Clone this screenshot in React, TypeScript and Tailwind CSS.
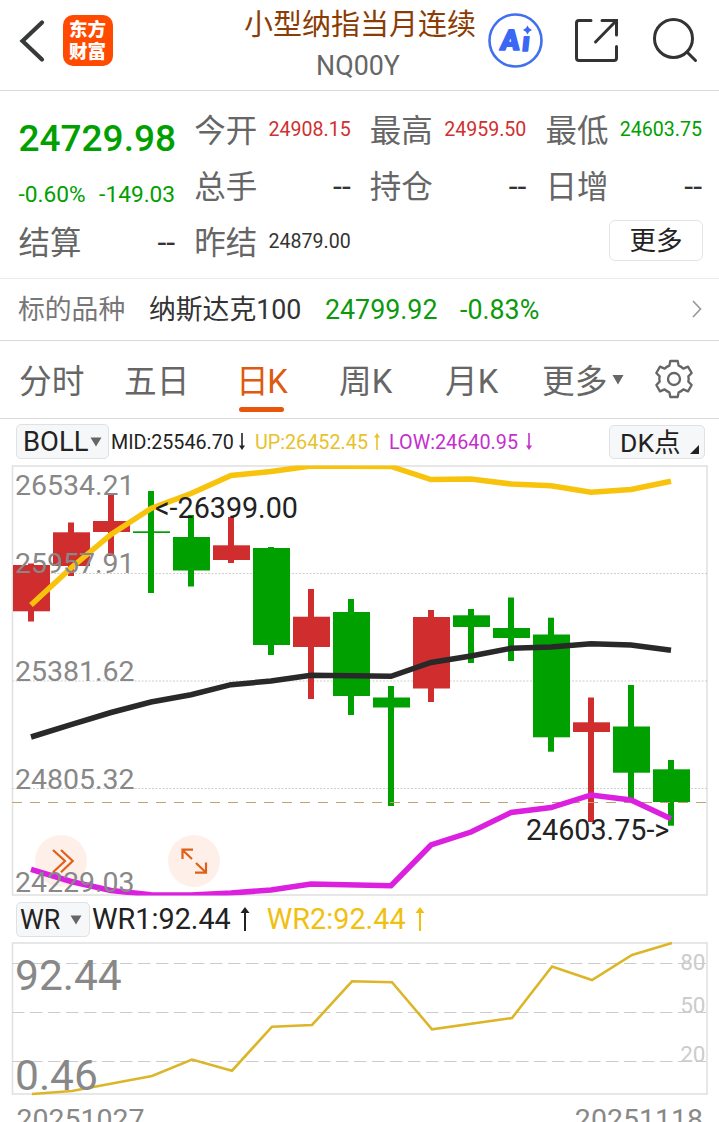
type Candle = {
  up: boolean;
  top: number;
  bottom: number;
  high: number;
  low: number;
};

type Point = [number, number];

const candles: Candle[] = [
  { up: true, top: 565, bottom: 611.3, high: 563.5, low: 621.5 },
  { up: true, top: 532.3, bottom: 566, high: 522.5, low: 576 },
  { up: true, top: 521, bottom: 532, high: 495, low: 556 },
  { up: false, top: 531.3, bottom: 533, high: 491, low: 593 },
  { up: false, top: 537, bottom: 570.5, high: 515, low: 586.5 },
  { up: true, top: 545.3, bottom: 560, high: 517, low: 563 },
  { up: false, top: 548, bottom: 645, high: 547, low: 655 },
  { up: true, top: 616.7, bottom: 647, high: 589, low: 699 },
  { up: false, top: 612, bottom: 696, high: 599, low: 715 },
  { up: false, top: 697.5, bottom: 707.5, high: 686, low: 806 },
  { up: true, top: 617, bottom: 688.5, high: 610, low: 702 },
  { up: false, top: 615.3, bottom: 627, high: 609, low: 663 },
  { up: false, top: 628, bottom: 638, high: 597.5, low: 661 },
  { up: false, top: 634.5, bottom: 737.3, high: 617.7, low: 751.7 },
  { up: true, top: 722.3, bottom: 732, high: 697.5, low: 822 },
  { up: false, top: 726.5, bottom: 772.7, high: 685, low: 800 },
  { up: false, top: 769.3, bottom: 802, high: 760, low: 825.7 },
];

const upper: Point[] = [
  [31, 605], [71, 568], [111, 534.5], [151, 508.5], [191, 493.5], [231, 475.5],
  [271, 471.5], [311, 466], [391, 466.5], [431, 479.5], [471, 479], [511, 484],
  [551, 485.8], [591, 492.3], [631, 489.5], [671, 481.3],
];

const middle: Point[] = [
  [31, 737], [71, 724.7], [111, 712.5], [151, 702], [191, 694.7], [231, 684.7],
  [271, 681], [311, 675.2], [391, 676.3], [431, 662.5], [471, 656], [511, 648.3],
  [551, 647], [591, 643.7], [631, 645], [671, 650.3],
];

const lower: Point[] = [
  [31, 869.3], [71, 881.5], [111, 890.5], [151, 894.7], [191, 895], [231, 893],
  [271, 890], [311, 884], [391, 885.7], [431, 845], [471, 832], [511, 812.5],
  [551, 807.5], [591, 795], [631, 800], [671, 818.7],
];

const wr: Point[] = [
  [32, 1094], [72, 1091], [112, 1083.5], [152, 1076], [192, 1059.5], [232, 1070.7],
  [272, 1026.7], [312, 1025], [352, 981.3], [392, 982.2], [432, 1029.3], [512, 1018],
  [552, 966.5], [592, 980], [632, 955], [672, 943],
];

const toPoints = (points: Point[]) => points.map((p) => p.join(",")).join(" ");

const Header = () => (
  <header className="flex h-[91px] items-start border-b border-[#d9d9d9]">
    <div className="flex w-[242px] items-center pl-[18px] pt-[15px]">
      <svg width="28" height="44" viewBox="18 18 28 44" fill="none" stroke="#37393b" strokeWidth="4.2">
        <path d="M42 21.500 L22.500 40 L42 58.500" strokeLinecap="round" />
      </svg>
      <div className="ml-[16.5px] flex h-[51px] w-[50px] flex-col items-center justify-center rounded-[10px] bg-[#ff4a00] text-[18.5px] leading-[22px] font-black text-white">
        <span>东方</span>
        <span>财富</span>
      </div>
    </div>
    <div className="flex w-[236px] flex-col items-center whitespace-nowrap">
      <h1 className="mt-[5px] text-[29px] leading-[40px] text-[#8b3c04]">小型纳指当月连续</h1>
      <p className="mt-[3px] mr-[4px] text-[26.8px] leading-[36px] text-[#666]">NQ00Y</p>
    </div>
    <svg className="ml-[8px] mt-[11px]" width="60" height="60" viewBox="486 11 60 60">
      <circle cx="515.500" cy="40.500" r="26" fill="none" stroke="#4070f0" strokeWidth="2.600" />
      <g fontWeight="900" fill="#3a68f5" stroke="#3a68f5" strokeWidth="1.600" strokeLinejoin="round">
        <text transform="translate(499.500 49.500) skewX(-6)" fontSize="28.500">
          A
        </text>
        <text transform="translate(521.200 51) skewX(-6)" fontSize="27">
          ı
        </text>
      </g>
      <path d="M527.500 25.500 Q528.500 28.800 532 30 Q528.500 31.200 527.500 34.500 Q526.500 31.200 523 30 Q526.500 28.800 527.500 25.500Z" fill="#3a68f5" />
    </svg>
    <svg className="ml-[26px] mt-[16px]" width="50" height="50" viewBox="572 16 50 50" fill="none" stroke="#333" strokeWidth="3" strokeLinecap="round">
      <path d="M591 20.500 H579 Q576.500 20.500 576.500 23 V58 Q576.500 60.500 579 60.500 H614 Q616.500 60.500 616.500 58 V46.500" />
      <path d="M602 20.500 H616.500 V35 M616 21 L595.500 42" />
    </svg>
    <svg className="ml-[27px] mt-[14px]" width="50" height="52" viewBox="649 14 50 52" fill="none" stroke="#333" strokeWidth="3" strokeLinecap="round">
      <circle cx="673.500" cy="38.500" r="19" />
      <path d="M687 52 L695.500 60.500" />
    </svg>
  </header>
);

type CellProps = { label: string; value: string; color?: string };

const Cell = ({ label, value, color = "text-[#333]" }: CellProps) => (
  <div className="flex items-start justify-between whitespace-nowrap">
    <span className="pt-[3px] text-[31.5px] leading-[56px] text-[#666]">{label}</span>
    <span className={`pt-[1px] leading-[56px] ${value === "--" ? "text-[32px]" : "text-[19.6px]"} ${color}`}>
      {value}
    </span>
  </div>
);

const Quote = () => (
  <section className="grid h-[187px] grid-cols-4 grid-rows-[56px_56px_56px] gap-x-[19px] pt-[10px] pr-[17px] pl-[18.5px]">
    <div className="row-span-2 whitespace-nowrap text-[#00a000]">
      <div className="mt-[16px] text-[37px] leading-[44px] font-medium">24729.98</div>
      <div className="mt-[19px] flex justify-between text-[22.7px] leading-[30px]">
        <span>-0.60%</span>
        <span>-149.03</span>
      </div>
    </div>
    <Cell label="今开" value="24908.15" color="text-[#d03030]" />
    <Cell label="最高" value="24959.50" color="text-[#d03030]" />
    <Cell label="最低" value="24603.75" color="text-[#00a000]" />
    <Cell label="总手" value="--" />
    <Cell label="持仓" value="--" />
    <Cell label="日增" value="--" />
    <Cell label="结算" value="--" />
    <Cell label="昨结" value="24879.00" />
    <button className="col-start-4 mt-[7px] -mr-px h-[41px] w-[94px] justify-self-end rounded-[6px] border-[1.5px] border-[#e4e4e4] text-[26.5px] leading-[36px] text-[#222]">
      更多
    </button>
  </section>
);

const Underlying = () => (
  <section className="flex h-[63px] items-center border-y border-t-[#ebebeb] border-b-[#d9d9d9] pt-px pr-[16px] pl-[18px] text-[26.8px] whitespace-nowrap">
    <span className="w-[131px] text-[#777]">标的品种</span>
    <span className="w-[176px] text-[#333]">纳斯达克100</span>
    <span className="w-[135px] text-[#0d990d]">24799.92</span>
    <span className="text-[#0d990d]">-0.83%</span>
    <svg className="ml-auto" width="12" height="20" viewBox="0 0 12 20" fill="none" stroke="#999" strokeWidth="1.700">
      <path d="M2 1 L9.500 9 L2 17" />
    </svg>
  </section>
);

const Tabs = () => (
  <nav className="flex h-[78px] items-start border-b border-[#d9d9d9] pt-[17px] pl-[19px] text-[32.7px] leading-[48px] whitespace-nowrap text-[#666]">
    <span className="w-[105px]">分时</span>
    <span className="w-[112px]">五日</span>
    <span className="flex w-[103px] flex-col text-[#dd5a10]">
      <span className="tracking-[-1.5px]">日K</span>
      <i className="mt-px ml-[3px] h-[5px] w-[45px] rounded-full bg-[#e8560c]" />
    </span>
    <span className="w-[106px]">周K</span>
    <span className="w-[97px]">月K</span>
    <span>更多</span>
    <svg className="mt-[16px] ml-[5px]" width="12" height="12" viewBox="0 0 12 12">
      <path d="M0.500 1 H11.500 L6 10.500Z" fill="#666" />
    </svg>
    <svg className="mt-px ml-[30px]" width="40" height="40" viewBox="-60 -60 120 120" fill="none" stroke="#666" strokeWidth="7" strokeLinejoin="round">
      <path d="M-11 -54 H11 L14 -40 Q22 -37 28 -31 L42 -37 L53 -18 L43 -8 Q45 0 43 8 L53 18 L42 37 L28 31 Q22 37 14 40 L11 54 H-11 L-14 40 Q-22 37 -28 31 L-42 37 L-53 18 L-43 8 Q-45 0 -43 -8 L-53 -18 L-42 -37 L-28 -31 Q-22 -37 -14 -40Z" />
      <circle r="18" />
    </svg>
  </nav>
);

type ArrowProps = { height: number; down?: boolean; className?: string };

const Arrow = ({ height, down, className }: ArrowProps) => (
  <svg className={`${down ? "rotate-180" : ""} ${className}`} width="10" height={height} viewBox={`0 0 10 ${height}`}>
    <path d={`M5 2 V${height}`} stroke="currentColor" strokeWidth={height > 20 ? 2 : 1.6} />
    <path d={height > 20 ? "M5 0 L9.500 6 H0.500Z" : "M5 0 L8 4.500 H2Z"} fill="currentColor" />
  </svg>
);

const Triangle = () => (
  <svg className="-mt-[2px]" width="12" height="10" viewBox="0 0 12 10">
    <path d="M0.500 0.500 H11.500 L6 9.500Z" fill="#666" />
  </svg>
);

const BollBar = () => (
  <div className="flex h-[41px] items-center pt-[4px] pl-[16px] text-[19.7px] whitespace-nowrap">
    <button className="flex h-[35px] w-[93px] items-center gap-[2px] rounded-[5px] border border-[#dfe1e4] bg-[#f6f7f9] pt-[3px] pl-[6px] text-[27.4px] text-[#222]">
      BOLL
      <Triangle />
    </button>
    <span className="ml-[2px] pt-[3px] text-[#222]">MID:25546.70</span>
    <Arrow height={17} down className="ml-[3px] text-[#222]" />
    <span className="ml-[8px] pt-[3px] text-[19.8px] text-[#e8c22c]">UP:26452.45</span>
    <Arrow height={17} className="ml-[4px] text-[#e8c22c]" />
    <span className="ml-[7px] pt-[3px] text-[19.8px] text-[#c52fce]">LOW:24640.95</span>
    <Arrow height={17} down className="ml-[6px] text-[#c52fce]" />
    <button className="mt-[1px] mr-[14px] ml-auto flex h-[34px] w-[96px] items-center rounded-[5px] border border-[#dfe1e4] bg-[#f6f7f9] pt-[2px] pl-[10px] text-[26.5px] text-[#222]">
      DK点
      <svg className="mt-[13px] ml-[9px]" width="9" height="9" viewBox="0 0 9 9">
        <path d="M9 0 V9 H0Z" fill="#222" />
      </svg>
    </button>
  </div>
);

const priceLabels = [
  { y: 495, text: "26534.21" },
  { y: 573.3, text: "25957.91" },
  { y: 681, text: "25381.62" },
  { y: 788.8, text: "24805.32" },
  { y: 891.8, text: "24229.03" },
];

// Both charts share one coordinate space measured from the top of the screen.
const PriceChart = () => (
  <svg className="block" width="719" height="440" viewBox="0 460 719 440">
    <clipPath id="frame">
      <rect x="12" y="465.500" width="696" height="430" />
    </clipPath>
    <rect x="12.500" y="466" width="694.500" height="429" fill="none" stroke="#e2e2e2" strokeWidth="1.600" />
    {[573.5, 681, 788.5].map((y) => (
      <path key={y} d={`M12 ${y} H708`} stroke="#cfcfcf" strokeDasharray="2 1.500" />
    ))}
    <circle cx="61" cy="861" r="26" fill="#fef0e8" />
    <circle cx="194" cy="861" r="26" fill="#fef0e8" />
    {candles.map((c, i) => (
      <g key={i} fill={c.up ? "#d02e2e" : "#00a000"}>
        <rect x={28 + i * 40} y={c.high} width="6" height={c.low - c.high} />
        <rect x={13 + i * 40} y={c.top} width="37" height={c.bottom - c.top} />
      </g>
    ))}
    <path d="M12 802.500 H706" stroke="#c3a070" strokeDasharray="10 8" />
    <g fill="none" strokeWidth="5.500" clipPath="url(#frame)">
      <polyline points={toPoints(middle)} stroke="#292929" />
      <polyline points={toPoints(upper)} stroke="#f7c30c" />
      <polyline points={toPoints(lower)} stroke="#dc20e0" />
    </g>
    <g fill="none" stroke="#de6019" strokeWidth="2.200">
      <path d="M53 850 L65 861 L53 872.300 M61 850 L72.700 861 L61 872.300" />
      <path d="M182.500 859 V849.700 H193 M183 850.500 L192 859 M206 862.500 V872.700 H195 M205.500 872 L196 863" />
    </g>
    <g fontSize="28.500" fill="#888">
      {priceLabels.map((l) => (
        <text key={l.text} x="15" y={l.y}>
          {l.text}
        </text>
      ))}
    </g>
    <g fontSize="28.700" fill="#222">
      <text x="155" y="517.700">{"<-26399.00"}</text>
      <text x="526" y="840">{"24603.75->"}</text>
    </g>
  </svg>
);

const WrBar = () => (
  <div className="flex h-[38px] items-center pl-[16px] text-[28.8px] whitespace-nowrap">
    <button className="flex h-[35px] w-[74px] items-center gap-[10px] rounded-[5px] border border-[#dfe1e4] bg-[#f6f7f9] pt-[3px] pl-[3px] text-[26.8px] text-[#222]">
      WR
      <Triangle />
    </button>
    <span className="ml-[2px] pt-[2px] text-[#222]">WR1:92.44</span>
    <Arrow height={24} className="ml-[9px] text-[#222]" />
    <span className="ml-[17px] pt-[2px] text-[#f0c010]">WR2:92.44</span>
    <Arrow height={24} className="ml-[9px] text-[#f0c010]" />
  </div>
);

const WrChart = () => (
  <svg className="block" width="719" height="184" viewBox="0 938 719 184">
    <rect x="12.500" y="943" width="694.500" height="151" fill="none" stroke="#e2e2e2" strokeWidth="1.600" />
    {[963.5, 1012.5, 1061.5].map((y) => (
      <path key={y} d={`M12 ${y} H706`} stroke="#cccccc" strokeDasharray="12.500 5.500" />
    ))}
    <g fontSize="22.500" fill="#ccc" textAnchor="end">
      <text x="705.500" y="969.800">80</text>
      <text x="705.500" y="1013">50</text>
      <text x="705.500" y="1062">20</text>
    </g>
    <polyline points={toPoints(wr)} fill="none" stroke="#dcb628" strokeWidth="2.600" />
    <g fontSize="42.500" fill="#888">
      <text x="15" y="990">92.44</text>
      <text x="15" y="1090">0.46</text>
    </g>
    <g fontSize="28.500" fill="#888">
      <text x="16.500" y="1128.500">20251027</text>
      <text x="703" y="1128.500" textAnchor="end">
        20251118
      </text>
    </g>
  </svg>
);

const App = () => {
  return (
    <div className="h-[1122px] w-[719px] overflow-hidden bg-white font-[Roboto,'Noto_Sans_CJK_SC',sans-serif]">
      <Header />
      <Quote />
      <Underlying />
      <Tabs />
      <BollBar />
      <PriceChart />
      <WrBar />
      <WrChart />
    </div>
  );
};

export default App;
